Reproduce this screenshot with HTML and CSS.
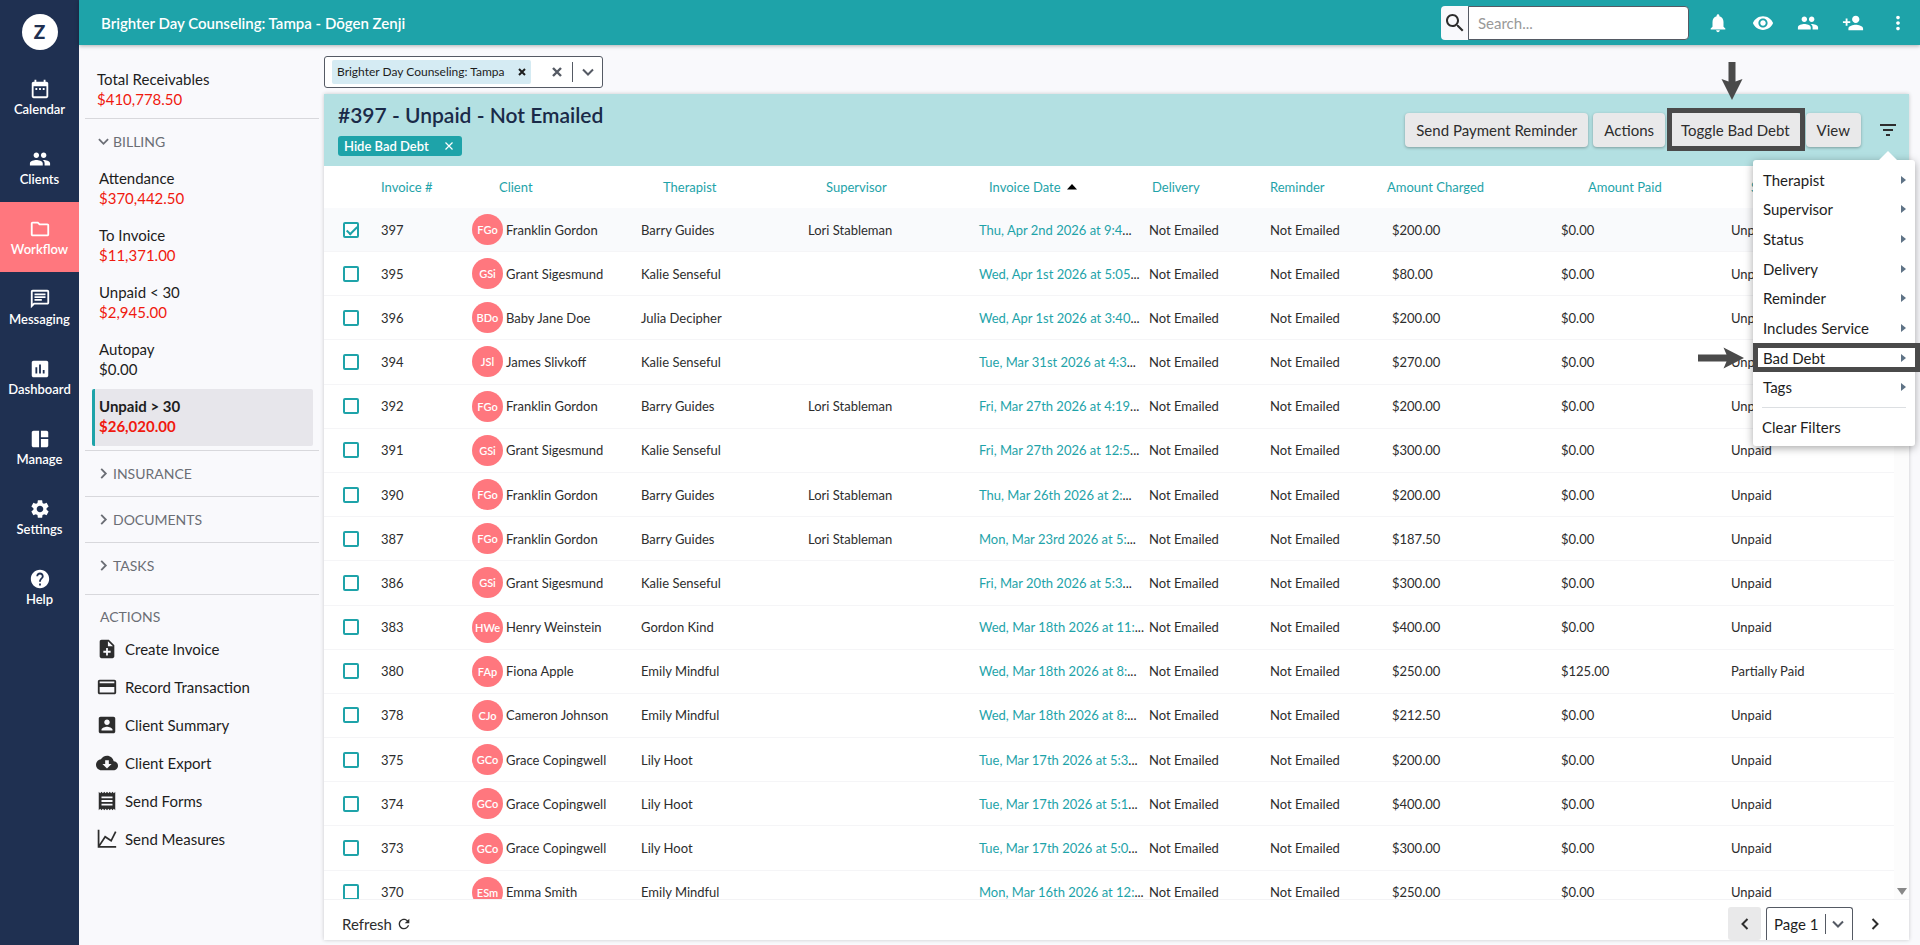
FILE: index.html
```html
<!DOCTYPE html>
<html lang="en">
<head>
  <meta charset="utf-8">
  <title>Workflow - Billing</title>
  <link rel="stylesheet" href="styles.css">
</head>
<body>
  <nav class="nav">
    <a class="logo" href="#"><span>Z</span></a>
    <a class="nav-item" href="#"><svg viewBox="0 0 24 24"><path d="M9 11H7v2h2v-2zm4 0h-2v2h2v-2zm4 0h-2v2h2v-2zm2-7h-1V2h-2v2H8V2H6v2H5c-1.11 0-1.99.9-1.99 2L3 20c0 1.1.89 2 2 2h14c1.1 0 2-.9 2-2V6c0-1.1-.9-2-2-2zm0 16H5V9h14v11z"/></svg>Calendar</a>
    <a class="nav-item" href="#"><svg class="wide" viewBox="0 0 24 24"><path d="M16 11c1.66 0 2.99-1.34 2.99-3S17.66 5 16 5s-3 1.34-3 3 1.34 3 3 3zm-8 0c1.66 0 2.99-1.34 2.99-3S9.66 5 8 5 5 6.34 5 8s1.34 3 3 3zm0 2c-2.33 0-7 1.17-7 3.5V19h14v-2.500c0-2.330-4.670-3.500-7-3.500zm8 0c-.29 0-.62.020-.97.050 1.160.840 1.970 1.970 1.970 3.450V19h6v-2.500c0-2.330-4.670-3.500-7-3.500z"/></svg>Clients</a>
    <a class="nav-item active" href="#"><svg viewBox="0 0 24 24"><path d="M9.170 6l2 2H20v10H4V6h5.170M10 4H4c-1.100 0-1.990.9-1.990 2L2 18c0 1.100.9 2 2 2h16c1.100 0 2-.9 2-2V8c0-1.100-.9-2-2-2h-8l-2-2z"/></svg>Workflow</a>
    <a class="nav-item" href="#"><svg viewBox="0 0 24 24"><path d="M4 4h16v12H5.170L4 17.170V4m0-2c-1.100 0-1.990.9-1.990 2L2 22l4-4h14c1.100 0 2-.9 2-2V4c0-1.100-.9-2-2-2H4zm2 10h8v2H6v-2zm0-3h12v2H6V9zm0-3h12v2H6V6z"/></svg>Messaging</a>
    <a class="nav-item" href="#"><svg viewBox="0 0 24 24"><path d="M19 3H5c-1.100 0-2 .9-2 2v14c0 1.100.9 2 2 2h14c1.100 0 2-.9 2-2V5c0-1.100-.9-2-2-2zM9 17H7v-7h2v7zm4 0h-2V7h2v10zm4 0h-2v-4h2v4z"/></svg>Dashboard</a>
    <a class="nav-item" href="#"><svg viewBox="0 0 24 24"><path d="M11 21H5c-1.100 0-2-.9-2-2V5c0-1.100.9-2 2-2h6v18zm2 0h6c1.100 0 2-.9 2-2v-7h-8v9zm8-11V5c0-1.100-.9-2-2-2h-6v7h8z"/></svg>Manage</a>
    <a class="nav-item" href="#"><svg viewBox="0 0 24 24"><path d="M19.140 12.940c.040-.3.060-.61.060-.94 0-.32-.020-.64-.070-.94l2.030-1.580c.18-.14.23-.41.12-.61l-1.920-3.320c-.12-.22-.37-.29-.59-.22l-2.390.96c-.5-.38-1.030-.7-1.620-.94l-.36-2.540c-.040-.24-.24-.41-.48-.41h-3.840c-.24 0-.43.17-.47.41l-.36 2.540c-.59.24-1.130.57-1.620.94l-2.390-.96c-.22-.080-.47 0-.59.22L2.740 8.870c-.12.21-.080.47.12.61l2.030 1.580c-.050.3-.090.63-.090.94s.020.64.070.94l-2.030 1.580c-.18.14-.23.41-.12.61l1.920 3.320c.12.22.37.29.59.22l2.390-.96c.5.38 1.030.7 1.620.94l.36 2.540c.050.24.24.41.48.41h3.840c.24 0 .44-.17.47-.41l.36-2.540c.59-.24 1.130-.56 1.620-.94l2.390.96c.22.080.47 0 .59-.22l1.920-3.320c.12-.22.070-.47-.12-.61l-2.010-1.580zM12 15.600c-1.980 0-3.600-1.620-3.600-3.600s1.620-3.600 3.600-3.600 3.600 1.620 3.600 3.600-1.620 3.600-3.600 3.600z"/></svg>Settings</a>
    <a class="nav-item" href="#"><svg viewBox="0 0 24 24"><path d="M12 2C6.480 2 2 6.480 2 12s4.480 10 10 10 10-4.480 10-10S17.520 2 12 2zm1 17h-2v-2h2v2zm2.070-7.750l-.9.920C13.450 12.900 13 13.500 13 15h-2v-.5c0-1.100.45-2.100 1.170-2.830l1.240-1.260c.37-.36.59-.86.59-1.410 0-1.100-.9-2-2-2s-2 .9-2 2H8c0-2.210 1.790-4 4-4s4 1.790 4 4c0 .88-.36 1.680-.93 2.250z"/></svg>Help</a>
  </nav>

  <div class="app">
    <header class="topbar">
      <div class="practice">Brighter Day Counseling: Tampa - Dōgen Zenji</div>
      <div class="search">
        <label for="search" aria-label="Search"><svg width="24" height="24" viewBox="0 0 24 24"><path d="M15.500 14h-.79l-.28-.27C15.410 12.590 16 11.110 16 9.500 16 5.910 13.090 3 9.500 3S3 5.910 3 9.500 5.910 16 9.500 16c1.610 0 3.090-.59 4.230-1.570l.27.28v.79l5 4.990L20.490 19l-4.990-5zm-6 0C7.010 14 5 11.990 5 9.500S7.010 5 9.500 5 14 7.010 14 9.500 11.990 14 9.500 14z"/></svg></label>
        <input type="text" id="search" placeholder="Search...">
      </div>
      <div class="top-icons">
        <button aria-label="Notifications"><svg viewBox="0 0 24 24"><path d="M12 22c1.100 0 2-.9 2-2h-4c0 1.100.89 2 2 2zm6-6v-5c0-3.070-1.640-5.640-4.500-6.320V4c0-.83-.67-1.500-1.500-1.500s-1.500.67-1.500 1.500v.68C7.630 5.360 6 7.920 6 11v5l-2 2v1h16v-1l-2-2z"/></svg></button>
        <button aria-label="View"><svg viewBox="0 0 24 24"><path d="M12 4.500C7 4.500 2.730 7.610 1 12c1.730 4.390 6 7.500 11 7.500s9.270-3.110 11-7.500c-1.730-4.390-6-7.500-11-7.500zM12 17c-2.760 0-5-2.240-5-5s2.240-5 5-5 5 2.240 5 5-2.240 5-5 5zm0-8c-1.660 0-3 1.340-3 3s1.340 3 3 3 3-1.340 3-3-1.340-3-3-3z"/></svg></button>
        <button aria-label="Clients"><svg viewBox="0 0 24 24"><path d="M16 11c1.660 0 2.990-1.340 2.990-3S17.660 5 16 5s-3 1.340-3 3 1.340 3 3 3zm-8 0c1.660 0 2.990-1.340 2.990-3S9.660 5 8 5 5 6.340 5 8s1.340 3 3 3zm0 2c-2.330 0-7 1.170-7 3.500V19h14v-2.500c0-2.330-4.670-3.500-7-3.500zm8 0c-.29 0-.62.020-.97.050 1.160.84 1.970 1.970 1.970 3.450V19h6v-2.500c0-2.330-4.670-3.500-7-3.500z"/></svg></button>
        <button aria-label="Add client"><svg viewBox="0 0 24 24"><path d="M15 12c2.210 0 4-1.790 4-4s-1.790-4-4-4-4 1.790-4 4 1.790 4 4 4zm-9-2V7H4v3H1v2h3v3h2v-3h3v-2H6zm9 4c-2.670 0-8 1.340-8 4v2h16v-2c0-2.660-5.330-4-8-4z"/></svg></button>
        <button aria-label="More"><svg viewBox="0 0 24 24"><path d="M12 8c1.100 0 2-.9 2-2s-.9-2-2-2-2 .9-2 2 .9 2 2 2zm0 2c-1.100 0-2 .9-2 2s.9 2 2 2 2-.9 2-2-.9-2-2-2zm0 6c-1.100 0-2 .9-2 2s.9 2 2 2 2-.9 2-2-.9-2-2-2z"/></svg></button>
      </div>
    </header>

    <div class="body">
      <aside class="side">
        <div class="total">
          <div>Total Receivables</div>
          <div class="red">$410,778.50</div>
        </div>
        <button class="group open"><svg viewBox="0 0 12 12"><path d="M1 3.500l5 5 5-5"/></svg>BILLING</button>
        <a class="queue" href="#">Attendance<span class="red">$370,442.50</span></a>
        <a class="queue" href="#">To Invoice<span class="red">$11,371.00</span></a>
        <a class="queue" href="#">Unpaid &lt; 30<span class="red">$2,945.00</span></a>
        <a class="queue" href="#">Autopay<span>$0.00</span></a>
        <a class="queue active" href="#">Unpaid &gt; 30<span class="red">$26,020.00</span></a>
        <button class="group"><svg viewBox="0 0 12 12"><path d="M3.500 1l5 5-5 5"/></svg>INSURANCE</button>
        <button class="group"><svg viewBox="0 0 12 12"><path d="M3.500 1l5 5-5 5"/></svg>DOCUMENTS</button>
        <button class="group last"><svg viewBox="0 0 12 12"><path d="M3.500 1l5 5-5 5"/></svg>TASKS</button>

        <div class="side-actions">
          <div class="side-title">ACTIONS</div>
          <a href="#"><svg viewBox="0 0 24 24"><path d="M14 2H6c-1.100 0-1.990.9-1.990 2L4 20c0 1.100.89 2 1.990 2H18c1.100 0 2-.9 2-2V8l-6-6zm2 14h-3v3h-2v-3H8v-2h3v-3h2v3h3v2zm-3-7V3.500L18.500 9H13z"/></svg>Create Invoice</a>
          <a href="#"><svg viewBox="0 0 24 24"><path d="M20 4H4c-1.110 0-1.990.89-1.990 2L2 18c0 1.110.89 2 2 2h16c1.110 0 2-.89 2-2V6c0-1.110-.89-2-2-2zm0 14H4v-6h16v6zm0-10H4V6h16v2z"/></svg>Record Transaction</a>
          <a href="#"><svg viewBox="0 0 24 24"><path d="M3 5v14c0 1.100.89 2 2 2h14c1.100 0 2-.9 2-2V5c0-1.100-.9-2-2-2H5c-1.110 0-2 .9-2 2zm12 4c0 1.660-1.340 3-3 3s-3-1.340-3-3 1.340-3 3-3 3 1.340 3 3zm-9 8c0-2 4-3.100 6-3.100s6 1.100 6 3.100v1H6v-1z"/></svg>Client Summary</a>
          <a href="#"><svg viewBox="0 0 24 24"><path d="M19.350 10.040C18.670 6.590 15.640 4 12 4 9.110 4 6.600 5.640 5.350 8.040 2.340 8.360 0 10.910 0 14c0 3.310 2.690 6 6 6h13c2.760 0 5-2.240 5-5 0-2.640-2.050-4.780-4.650-4.960zM17 13l-5 5-5-5h3V9h4v4h3z"/></svg>Client Export</a>
          <a href="#"><svg viewBox="0 0 24 24"><path d="M18 17H6v-2h12v2zm0-4H6v-2h12v2zm0-4H6V7h12v2zM3 22l1.500-1.500L6 22l1.500-1.500L9 22l1.500-1.500L12 22l1.500-1.500L15 22l1.500-1.500L18 22l1.500-1.500L21 22V2l-1.500 1.500L18 2l-1.500 1.500L15 2l-1.500 1.500L12 2l-1.500 1.500L9 2 7.500 3.500 6 2 4.500 3.500 3 2v20z"/></svg>Send Forms</a>
          <a href="#"><svg viewBox="0 0 24 24"><path d="M2.800 2v18.500H22M3.500 19.500L10 9.500l6.500 4.500L21.500 4" fill="none" stroke="#2d2d2d" stroke-width="1.900"/></svg>Send Measures</a>
        </div>
      </aside>

      <main class="main">
        <div class="location">
          <div class="chip">Brighter Day Counseling: Tampa<button aria-label="Remove"><svg width="8" height="8" viewBox="0 0 8 8"><path d="M1 1l6 6M7 1L1 7" stroke="#1d1d1d" stroke-width="2"/></svg></button></div>
          <button class="clear" aria-label="Clear"><svg width="12" height="12" viewBox="0 0 12 12"><path d="M2 2l8 8M10 2l-8 8" stroke="#555a64" stroke-width="2.400"/></svg></button>
          <span class="divider"></span>
          <button class="caret" aria-label="Open"><svg width="12" height="12" viewBox="0 0 12 12"><path d="M1 3.500l5 5 5-5" fill="none" stroke="#555a64" stroke-width="2"/></svg></button>
        </div>

        <section class="card">
          <div class="card-head">
            <div class="heading">
              <h1>#397 - Unpaid - Not Emailed</h1>
              <div class="tag">Hide Bad Debt<button aria-label="Remove filter"><svg width="8" height="8" viewBox="0 0 8 8"><path d="M.5.5l7 7m0-7l-7 7" stroke="#fff" stroke-width="1.200"/></svg></button></div>
            </div>
            <div class="toolbar">
              <button class="btn">Send Payment Reminder</button>
              <button class="btn">Actions</button>
              <button class="btn marked">Toggle Bad Debt
                <svg class="arrow-down" width="22" height="38" viewBox="0 0 22 38"><path d="M7.500 0h7v19.500l7-2.500L11 38 .5 17l7 2.500z"/></svg>
              </button>
              <button class="btn">View</button>
              <div class="filter">
                <button class="filter-btn" aria-label="Filters"><svg width="16" height="12" viewBox="0 0 16 12"><path d="M0 0h16v2H0zM3 5h10v2H3zM6 10h4v2H6z"/></svg></button>
                <div class="menu">
                  <ul>
                    <li><button>Therapist</button></li>
                    <li><button>Supervisor</button></li>
                    <li><button>Status</button></li>
                    <li><button>Delivery</button></li>
                    <li><button>Reminder</button></li>
                    <li><button>Includes Service</button></li>
                    <li class="marked"><button>Bad Debt</button>
                      <svg class="arrow-right" width="46" height="22" viewBox="0 0 46 22"><path d="M0 7.500v7h28.500l-3 7L46 11 25.500.5l3 7z"/></svg>
                    </li>
                    <li><button>Tags</button></li>
                  </ul>
                  <button class="clear-filters">Clear Filters</button>
                </div>
              </div>
            </div>
          </div>

          <div class="grid-wrap">
            <table class="grid">
              <colgroup>
                <col class="c-check"><col class="c-invoice"><col class="c-client"><col class="c-therapist"><col class="c-supervisor"><col class="c-date"><col class="c-delivery"><col class="c-reminder"><col class="c-charged"><col class="c-paid"><col class="c-status">
              </colgroup>
              <thead>
                <tr>
                  <th></th>
                  <th>Invoice #</th>
                  <th class="h-client">Client</th>
                  <th class="h-therapist">Therapist</th>
                  <th class="h-supervisor">Supervisor</th>
                  <th class="h-date">Invoice Date <svg width="10" height="6" viewBox="0 0 10 6"><path d="M0 5.500L5 0l5 5.500z"/></svg></th>
                  <th class="h-delivery">Delivery</th>
                  <th>Reminder</th>
                  <th>Amount Charged</th>
                  <th class="h-paid">Amount Paid</th>
                  <th class="h-status">Status</th>
                </tr>
              </thead>
              <tbody id="invoices"></tbody>
            </table>
            <div class="scrollbar"></div>
          </div>

          <div class="card-foot">
            <button class="refresh">Refresh <svg width="16" height="16" viewBox="0 0 24 24"><path d="M17.650 6.350C16.200 4.900 14.210 4 12 4c-4.420 0-7.990 3.580-7.990 8s3.570 8 7.990 8c3.730 0 6.840-2.550 7.730-6h-2.080c-.82 2.330-3.040 4-5.650 4-3.310 0-6-2.690-6-6s2.690-6 6-6c1.660 0 3.140.69 4.220 1.780L13 11h7V4l-2.350 2.350z"/></svg></button>
            <div class="pager">
              <button class="prev" aria-label="Previous page"><svg width="12" height="12" viewBox="0 0 12 12"><path d="M8.500 1l-5 5 5 5"/></svg></button>
              <div class="page-select">
                <select aria-label="Page"><option>Page 1</option></select>
                <span class="divider"></span>
                <svg width="12" height="12" viewBox="0 0 12 12"><path d="M1 3.500l5 5 5-5"/></svg>
              </div>
              <button class="next" aria-label="Next page"><svg width="12" height="12" viewBox="0 0 12 12"><path d="M3.500 1l5 5-5 5"/></svg></button>
            </div>
          </div>
        </section>
      </main>
    </div>
  </div>

  <script src="grid.js"></script>
</body>
</html>
```
FILE: styles.css
```css
* {
  box-sizing: border-box;
}

body {
  margin: 0;
  height: 100vh;
  display: flex;
  overflow: hidden;
  background: #f9f9fc;
  font-family: Lato, "Liberation Sans", sans-serif;
  font-size: 15px;
  line-height: 20px;
  color: #1d1d1d;
}

button,
input,
select {
  font: inherit;
  color: inherit;
}

button {
  padding: 0;
  border: none;
  background: none;
  cursor: pointer;
}

a {
  color: inherit;
  text-decoration: none;
}

svg {
  flex: none;
}

.red {
  color: #f0190f;
}

/* left navigation */
.nav {
  flex: none;
  width: 79px;
  background: #1f3051;
  color: #fff;
}

.logo {
  display: flex;
  justify-content: center;
  height: 62px;
  padding-top: 14px;
}

.logo span {
  width: 36px;
  height: 36px;
  border-radius: 50%;
  background: #fff;
  color: #1f3051;
  font-size: 19px;
  line-height: 36px;
  font-weight: 900;
  text-align: center;
}

.nav-item {
  height: 70px;
  display: flex;
  flex-direction: column;
  align-items: center;
  justify-content: center;
  font-size: 13px;
  line-height: 16px;
  font-weight: 600;
  gap: 1px;
}

.nav-item.active {
  background: #ff777e;
}

.nav-item svg {
  width: 22px;
  height: 22px;
  fill: #fff;
}

/* top bar */
.app {
  flex: 1;
  min-width: 0;
  display: flex;
  flex-direction: column;
}

.topbar {
  flex: none;
  height: 45px;
  padding: 0 10px 0 22px;
  display: flex;
  align-items: center;
  background: #1ea3a9;
  color: #fff;
  box-shadow: 0 1px 4px rgba(0,0,0,0.3);
  z-index: 1;
}

.practice {
  flex: 1;
  font-weight: 600;
}

.search {
  display: flex;
  width: 248px;
  height: 34px;
  margin-right: 17px;
}

.search label {
  width: 27px;
  display: flex;
  align-items: center;
  justify-content: center;
  background: #f9f9fc;
  border-radius: 4px 0 0 4px;
}

.search label svg {
  fill: #2d2d2d;
}

.search input {
  flex: 1;
  min-width: 0;
  padding: 0 9px;
  border: 1px solid #555a64;
  border-radius: 0 4px 4px 0;
  background: #fff;
  color: #1d1d1d;
}

.search input::placeholder {
  color: #999;
}

.top-icons {
  display: flex;
  gap: 21px;
}

.top-icons button {
  width: 24px;
  height: 24px;
  display: flex;
  align-items: center;
  justify-content: center;
}

.top-icons svg {
  width: 22px;
  height: 22px;
  fill: #fff;
}

/* billing side panel */
.body {
  flex: 1;
  min-height: 0;
  display: flex;
}

.side {
  flex: none;
  width: 245px;
  padding: 24px 5px 0 6px;
}

.total {
  padding: 0 12px 9px;
}

.group {
  width: 100%;
  height: 46px;
  padding-left: 13px;
  display: flex;
  align-items: center;
  gap: 4px;
  border-top: 1px solid #d8d8dc;
  color: #6b6e75;
  font-size: 14px;
}

.group.open {
  height: 43px;
  padding-top: 3px;
}

.group.last {
  height: 52px;
  padding-bottom: 6px;
}

.group svg {
  width: 11px;
  height: 11px;
  fill: none;
  stroke: #6b6e75;
  stroke-width: 2;
}

.queue {
  display: block;
  height: 57px;
  margin: 0 6px 0 7px;
  padding: 7px 4px;
  border-left: 3px solid transparent;
}

.queue span {
  display: block;
}

.queue.active {
  margin-bottom: 4px;
  border-left-color: #1ea3a9;
  border-radius: 2px;
  background: #e7e6eb;
  font-weight: 700;
}

.side-actions {
  padding: 12px 0 0 11px;
  border-top: 1px solid #d8d8dc;
}

.side-title {
  margin: 0 0 3px 4px;
  color: #6b6e75;
  font-size: 14px;
}

.side-actions a {
  height: 38px;
  display: flex;
  align-items: center;
  gap: 7px;
}

.side-actions a svg {
  width: 22px;
  height: 22px;
  fill: #2d2d2d;
}

/* main column */
.main {
  flex: 1;
  min-width: 0;
  display: flex;
  flex-direction: column;
  padding: 11px 11px 5px 0;
}

.location {
  align-self: flex-start;
  height: 32px;
  margin-bottom: 6px;
  padding: 3px 8px 3px 7px;
  display: flex;
  align-items: center;
  border: 1px solid #555a64;
  border-radius: 3px;
  background: #fff;
}

.chip {
  height: 24px;
  padding: 0 5px;
  display: flex;
  align-items: center;
  gap: 13px;
  border-radius: 2px;
  background: #d5ebf3;
  font-size: 12px;
}

.location button {
  display: flex;
}

.location .clear {
  margin-left: 20px;
}

.divider {
  width: 1px;
  height: 20px;
  background: #555a64;
}

.location .divider {
  margin: 0 9px;
}

.card {
  flex: 1;
  min-height: 0;
  display: flex;
  flex-direction: column;
  background: #fff;
  box-shadow: 0 0 4px rgba(0,0,0,0.2);
}

.card-head {
  flex: none;
  height: 72px;
  padding: 8px 8px 0 14px;
  display: flex;
  justify-content: space-between;
  background: #b3e0e2;
}

h1 {
  margin: 0 0 7px;
  font-size: 21px;
  line-height: 26px;
  font-weight: 600;
  color: #1a2a48;
}

.tag {
  display: inline-flex;
  align-items: center;
  gap: 16px;
  height: 20px;
  padding: 0 9px 0 6px;
  border-radius: 3px;
  background: #1ea3a9;
  color: #fff;
  font-size: 13px;
  font-weight: 600;
}

.tag button {
  display: flex;
}

.toolbar {
  display: flex;
  gap: 5px;
  padding-top: 11px;
}

.btn {
  position: relative;
  height: 34px;
  padding: 0 11px;
  border-radius: 4px;
  background: #e9e9ea;
  color: #2d2d2d;
  box-shadow: 0 1px 3px rgba(0,0,0,0.3);
}

.btn.marked::after {
  content: "";
  position: absolute;
  inset: -5px -4px -4px -3px;
  border: 5px solid #4a4a4a;
}

.arrow-down {
  position: absolute;
  left: 50%;
  bottom: 47px;
  margin-left: -14px;
  fill: #4a4a4a;
}

/* filter menu */
.filter {
  position: relative;
  margin-left: 9px;
}

.filter-btn {
  width: 26px;
  height: 34px;
}

.filter-btn svg {
  fill: #2d2d2d;
}

.menu {
  position: absolute;
  top: 47px;
  right: -14px;
  z-index: 2;
  width: 162px;
  border-radius: 3px;
  background: #fff;
  box-shadow: 0 2px 8px rgba(0,0,0,0.35);
}

.menu::before {
  content: "";
  position: absolute;
  top: -9px;
  right: 17px;
  border: 10px solid transparent;
  border-top: none;
  border-bottom-color: #fff;
}

.menu ul {
  height: 242px;
  margin: 0;
  padding: 5px 0 0;
  list-style: none;
  display: grid;
  grid-auto-rows: 1fr;
}

.menu li {
  position: relative;
  padding: 0 9px 0 10px;
}

.menu li button {
  width: 100%;
  height: 100%;
  display: flex;
  align-items: center;
  justify-content: space-between;
}

.menu li button::after {
  content: "";
  border: 4px solid transparent;
  border-left: 5px solid #5f7386;
  border-right: none;
}

.menu li.marked::before {
  content: "";
  position: absolute;
  inset: 0 -5px 0 0;
  border: 5px solid #4a4a4a;
}

.arrow-right {
  position: absolute;
  top: 4px;
  right: 171px;
  fill: #4a4a4a;
}

.clear-filters {
  display: block;
  width: 144px;
  height: 39px;
  margin: 5px 9px 0;
  border-top: 1px solid #dcdfe2;
  text-align: left;
}

/* invoice grid */
.grid-wrap {
  flex: 1;
  min-height: 0;
  display: flex;
  overflow: hidden;
  border-bottom: 1px solid #f3f3f5;
}

.grid {
  flex: 1;
  width: 100%;
  height: 749px;
  table-layout: fixed;
  border-collapse: collapse;
  font-size: 13px;
  white-space: nowrap;
  color: #2d2d2d;
}

.c-check { width: 57px; }
.c-invoice { width: 91px; }
.c-client { width: 169px; }
.c-therapist { width: 167px; }
.c-supervisor { width: 171px; }
.c-date { width: 170px; }
.c-delivery { width: 121px; }
.c-reminder { width: 117px; }
.c-charged { width: 174px; }
.c-paid { width: 170px; }
.c-status { width: 163px; }

.grid th {
  height: 42px;
  padding: 0;
  color: #1ea3a9;
  font-weight: 400;
  text-align: left;
}

.grid th svg {
  margin: 0 0 2px 3px;
}

.grid th.h-client { padding-left: 27px; }
.grid th.h-therapist { padding-left: 22px; }
.grid th.h-supervisor { padding-left: 18px; }
.grid th.h-date { padding-left: 10px; }
.grid th.h-delivery { padding-left: 3px; }
.grid th.h-paid { padding-left: 27px; }
.grid th.h-status { padding-left: 20px; }

.grid td {
  padding: 0;
  border-bottom: 1px solid #f5f5f7;
}

.grid td:first-child {
  padding-left: 19px;
}

.grid td.charged {
  padding-left: 5px;
}

.grid td a {
  color: #1ea3a9;
}

.grid tr.selected {
  background: #f9fafc;
}

.grid input {
  appearance: none;
  position: relative;
  display: block;
  width: 16px;
  height: 16px;
  margin: 0;
  border: 2px solid #1ea3a9;
  border-radius: 2px;
  background: #fff;
}

.grid input:checked::after {
  content: "";
  position: absolute;
  left: 4px;
  top: 0;
  width: 4px;
  height: 9px;
  border: solid #1ea3a9;
  border-width: 0 2px 2px 0;
  transform: rotate(45deg);
}

.client {
  display: flex;
  align-items: center;
  gap: 3px;
}

.avatar {
  width: 31px;
  height: 31px;
  border-radius: 50%;
  background: #ff777e;
  color: #fff;
  font-size: 11px;
  line-height: 31px;
  font-weight: 600;
  text-align: center;
}

.scrollbar {
  flex: none;
  width: 15px;
  margin-top: 42px;
  display: flex;
  align-items: flex-end;
  justify-content: center;
  padding-bottom: 4px;
  background: #fcfcfc;
}

.scrollbar::after {
  content: "";
  border: 5px solid transparent;
  border-top: 7px solid #888;
  border-bottom: none;
}

/* footer */
.card-foot {
  flex: none;
  height: 40px;
  padding: 7px 18px 0;
  display: flex;
  align-items: center;
  justify-content: space-between;
  overflow: hidden;
}

.refresh {
  display: flex;
  align-items: center;
  gap: 4px;
  color: #2d2d2d;
}

.refresh svg {
  fill: #2d2d2d;
}

.pager {
  display: flex;
  gap: 5px;
}

.pager button {
  width: 33px;
  height: 33px;
  border-radius: 3px;
}

.pager button svg {
  display: block;
  margin: auto;
  fill: none;
  stroke: #2d2d2d;
  stroke-width: 2;
}

.pager .prev {
  background: #e9e9ea;
}

.page-select {
  height: 33px;
  padding: 0 8px 0 7px;
  display: flex;
  align-items: center;
  gap: 6px;
  border: 1px solid #555a64;
  border-bottom: none;
  border-radius: 3px 3px 0 0;
}

.page-select select {
  appearance: none;
  padding: 0;
  border: none;
  background: none;
}

.page-select svg {
  fill: none;
  stroke: #555a64;
  stroke-width: 2;
}
```
FILE: grid.js
```js
const invoices = [
  ['397', 'FGo', 'Franklin Gordon', 'Barry Guides', 'Lori Stableman', 'Thu, Apr 2nd 2026 at 9:4', '$200.00', '$0.00', 'Unpaid'],
  ['395', 'GSi', 'Grant Sigesmund', 'Kalie Senseful', '', 'Wed, Apr 1st 2026 at 5:05', '$80.00', '$0.00', 'Unpaid'],
  ['396', 'BDo', 'Baby Jane Doe', 'Julia Decipher', '', 'Wed, Apr 1st 2026 at 3:40', '$200.00', '$0.00', 'Unpaid'],
  ['394', 'JSl', 'James Slivkoff', 'Kalie Senseful', '', 'Tue, Mar 31st 2026 at 4:3', '$270.00', '$0.00', 'Unpaid'],
  ['392', 'FGo', 'Franklin Gordon', 'Barry Guides', 'Lori Stableman', 'Fri, Mar 27th 2026 at 4:19', '$200.00', '$0.00', 'Unpaid'],
  ['391', 'GSi', 'Grant Sigesmund', 'Kalie Senseful', '', 'Fri, Mar 27th 2026 at 12:5', '$300.00', '$0.00', 'Unpaid'],
  ['390', 'FGo', 'Franklin Gordon', 'Barry Guides', 'Lori Stableman', 'Thu, Mar 26th 2026 at 2:', '$200.00', '$0.00', 'Unpaid'],
  ['387', 'FGo', 'Franklin Gordon', 'Barry Guides', 'Lori Stableman', 'Mon, Mar 23rd 2026 at 5:', '$187.50', '$0.00', 'Unpaid'],
  ['386', 'GSi', 'Grant Sigesmund', 'Kalie Senseful', '', 'Fri, Mar 20th 2026 at 5:3', '$300.00', '$0.00', 'Unpaid'],
  ['383', 'HWe', 'Henry Weinstein', 'Gordon Kind', '', 'Wed, Mar 18th 2026 at 11:', '$400.00', '$0.00', 'Unpaid'],
  ['380', 'FAp', 'Fiona Apple', 'Emily Mindful', '', 'Wed, Mar 18th 2026 at 8:', '$250.00', '$125.00', 'Partially Paid'],
  ['378', 'CJo', 'Cameron Johnson', 'Emily Mindful', '', 'Wed, Mar 18th 2026 at 8:', '$212.50', '$0.00', 'Unpaid'],
  ['375', 'GCo', 'Grace Copingwell', 'Lily Hoot', '', 'Tue, Mar 17th 2026 at 5:3', '$200.00', '$0.00', 'Unpaid'],
  ['374', 'GCo', 'Grace Copingwell', 'Lily Hoot', '', 'Tue, Mar 17th 2026 at 5:1', '$400.00', '$0.00', 'Unpaid'],
  ['373', 'GCo', 'Grace Copingwell', 'Lily Hoot', '', 'Tue, Mar 17th 2026 at 5:0', '$300.00', '$0.00', 'Unpaid'],
  ['370', 'ESm', 'Emma Smith', 'Emily Mindful', '', 'Mon, Mar 16th 2026 at 12:', '$250.00', '$0.00', 'Unpaid']
];

document.getElementById('invoices').innerHTML = invoices.map(([id, initials, client, therapist, supervisor, date, charged, paid, status], i) => `
  <tr class="${i === 0 ? 'selected' : ''}">
    <td><input type="checkbox" aria-label="Invoice ${id}" ${i === 0 ? 'checked' : ''}></td>
    <td>${id}</td>
    <td><div class="client"><span class="avatar">${initials}</span>${client}</div></td>
    <td>${therapist}</td>
    <td>${supervisor}</td>
    <td><a href="#">${date}</a>...</td>
    <td>Not Emailed</td>
    <td>Not Emailed</td>
    <td class="charged">${charged}</td>
    <td>${paid}</td>
    <td>${status}</td>
  </tr>`).join('');
```
